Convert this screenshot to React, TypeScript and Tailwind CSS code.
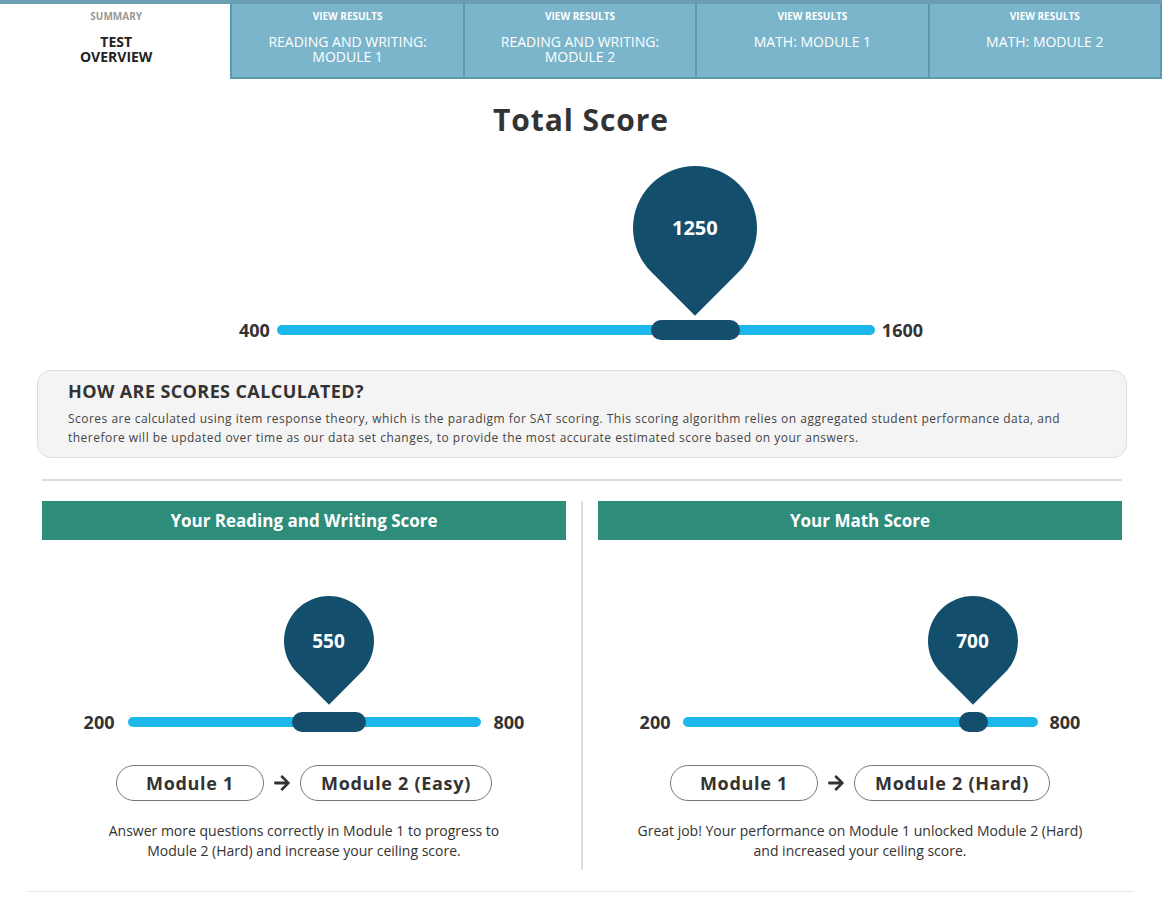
import React from 'react'

// Flikar överst
const tabs = [
  { sub: 'SUMMARY', title: ['TEST', 'OVERVIEW'], active: true },
  { sub: 'VIEW RESULTS', title: ['READING AND WRITING:', 'MODULE 1'] },
  { sub: 'VIEW RESULTS', title: ['READING AND WRITING:', 'MODULE 2'] },
  { sub: 'VIEW RESULTS', title: ['MATH: MODULE 1'] },
  { sub: 'VIEW RESULTS', title: ['MATH: MODULE 2'] },
]

type SliderProps = {
  min: number
  max: number
  value: number
  trackWidth: number
  pinCenter: number
  thumbLeft: number
  thumbWidth: number
  radius: number
  gap: number
  labelGap: string
  valueSize: string
}

function ScoreSlider({
  min,
  max,
  value,
  trackWidth,
  pinCenter,
  thumbLeft,
  thumbWidth,
  radius,
  gap,
  labelGap,
  valueSize,
}: SliderProps) {
  const pinTop = -(gap + radius * Math.SQRT2) - radius
  return (
    <div className={`flex items-center justify-center ${labelGap}`}>
      <span className="text-[18px] font-bold leading-6 text-[#333]">{min}</span>
      <div
        className="relative h-[10px] rounded-full bg-[#1db8ea]"
        style={{ width: trackWidth }}
      >
        {/* pin ovanför spåret */}
        <div
          className="absolute flex items-center justify-center"
          style={{ left: pinCenter - radius, top: pinTop, width: radius * 2, height: radius * 2 }}
        >
          <div className="absolute inset-0 rotate-45 rounded-[50%_50%_0_50%] bg-[#134f6c]" />
          <span className={`relative font-bold text-white ${valueSize}`}>{value}</span>
        </div>
        <div
          className="absolute top-[-5px] h-5 rounded-full bg-[#134f6c]"
          style={{ left: thumbLeft, width: thumbWidth }}
        />
      </div>
      <span className="text-[18px] font-bold leading-6 text-[#333]">{max}</span>
    </div>
  )
}

function ArrowIcon() {
  return (
    <svg viewBox="0 0 448 512" className="h-[18px] w-[16px] fill-[#333]">
      <path d="M190.5 66.9l22.2-22.2c9.4-9.4 24.6-9.4 33.9 0L441 239c9.4 9.4 9.4 24.6 0 33.9L246.6 467.3c-9.4 9.4-24.6 9.4-33.9 0l-22.2-22.2c-9.5-9.5-9.3-25 .4-34.3L311.4 296H24c-13.3 0-24-10.7-24-24v-32c0-13.3 10.7-24 24-24h287.4L190.9 101.2c-9.8-9.3-10-24.8-.4-34.3z" />
    </svg>
  )
}

function ModulePath({ second }: { second: string }) {
  return (
    <div className="flex items-center justify-center gap-[10px]">
      <span className="flex h-9 min-w-[148px] items-center justify-center rounded-full border border-[#777] px-5 text-[18px] font-bold tracking-[0.7px] text-[#333]">
        Module 1
      </span>
      <ArrowIcon />
      <span className="flex h-9 min-w-[148px] items-center justify-center rounded-full border border-[#777] px-5 text-[18px] font-bold tracking-[0.7px] text-[#333]">
        {second}
      </span>
    </div>
  )
}

export default function App() {
  return (
    <div className="min-h-screen bg-white font-['Open_Sans',sans-serif] text-[#333]">
      {/* Flikrad */}
      <div className="grid grid-cols-5 border-t-4 border-[#6a9fb6]">
        {tabs.map((tab, i) =>
          tab.active ? (
            <div key={i} className="flex h-[75px] flex-col items-center bg-white pt-[4px]">
              <span className="text-[10px] font-bold leading-4 text-[#999]">{tab.sub}</span>
              <div className="mt-[10px] text-center text-[14px] font-bold leading-[15px] text-[#222]">
                {tab.title.map((t) => (
                  <div key={t}>{t}</div>
                ))}
              </div>
            </div>
          ) : (
            <div
              key={i}
              className="flex h-[75px] flex-col items-center border-2 border-t-0 border-[#5d98ae] bg-[#7bb5cb] pt-[4px] -ml-[2px] first:ml-0"
            >
              <span className="text-[10px] font-bold leading-4 text-white">{tab.sub}</span>
              <div className="mt-[10px] text-center text-[14px] leading-[15px] text-white">
                {tab.title.map((t) => (
                  <div key={t}>{t}</div>
                ))}
              </div>
            </div>
          )
        )}
      </div>

      {/* Totalpoäng */}
      <h1 className="mt-[23px] text-center text-[30px] font-bold leading-9 tracking-[0.9px] text-[#333]">
        Total Score
      </h1>
      <div className="mt-[180px]">
        <ScoreSlider
          min={400}
          max={1600}
          value={1250}
          trackWidth={598}
          pinCenter={418}
          thumbLeft={374}
          thumbWidth={89}
          radius={62}
          gap={9}
          labelGap="gap-[7px]"
          valueSize="text-[20px]"
        />
      </div>

      {/* Förklaringsruta */}
      <div className="ml-[37px] mr-[35px] mt-[28px] rounded-[14px] border border-[#ddd] bg-[#f4f4f4] pb-[10px] pl-[30px] pr-[20px] pt-[8px]">
        <h2 className="text-[18px] font-bold leading-6 tracking-[0.4px] text-[#333]">
          HOW ARE SCORES CALCULATED?
        </h2>
        <p className="mt-[6px] text-[12px] leading-[19px] tracking-[0.48px] text-[#444]">
          Scores are calculated using item response theory, which is the paradigm for SAT scoring. This scoring
          algorithm relies on aggregated student performance data, and
          <br />
          therefore will be updated over time as our data set changes, to provide the most accurate estimated score
          based on your answers.
        </p>
      </div>

      <div className="ml-[42px] mr-[40px] mt-[21px] h-[2px] bg-[#ddd]" />

      {/* Delpoäng */}
      <div className="ml-[42px] mr-[40px] mt-[20px] flex">
        <div className="flex-1">
          <div className="flex h-[39px] items-center justify-center bg-[#2e8c7b] text-[17px] font-bold text-white">
            Your Reading and Writing Score
          </div>
          <div className="mt-[170px]">
            <ScoreSlider
              min={200}
              max={800}
              value={550}
              trackWidth={353}
              pinCenter={201}
              thumbLeft={164}
              thumbWidth={74}
              radius={45}
              gap={12}
              labelGap="gap-[13px]"
              valueSize="text-[19px]"
            />
          </div>
          <div className="mt-[31px]">
            <ModulePath second="Module 2 (Easy)" />
          </div>
          <p className="mt-[20px] pb-[9px] text-center text-[14px] leading-5 text-[#333]">
            Answer more questions correctly in Module 1 to progress to
            <br />
            Module 2 (Hard) and increase your ceiling score.
          </p>
        </div>

        <div className="mx-[15px] w-[2px] bg-[#ddd]" />

        <div className="flex-1">
          <div className="flex h-[39px] items-center justify-center bg-[#2e8c7b] text-[17px] font-bold text-white">
            Your Math Score
          </div>
          <div className="mt-[170px]">
            <ScoreSlider
              min={200}
              max={800}
              value={700}
              trackWidth={355}
              pinCenter={290}
              thumbLeft={276}
              thumbWidth={29}
              radius={45}
              gap={12}
              labelGap="gap-[12px]"
              valueSize="text-[19px]"
            />
          </div>
          <div className="mt-[31px]">
            <ModulePath second="Module 2 (Hard)" />
          </div>
          <p className="mt-[20px] pb-[9px] text-center text-[14px] leading-5 text-[#333]">
            Great job! Your performance on Module 1 unlocked Module 2 (Hard)
            <br />
            and increased your ceiling score.
          </p>
        </div>
      </div>

      <div className="mx-[28px] mt-[21px] h-[1px] bg-[#e8e8e8]" />
    </div>
  )
}
